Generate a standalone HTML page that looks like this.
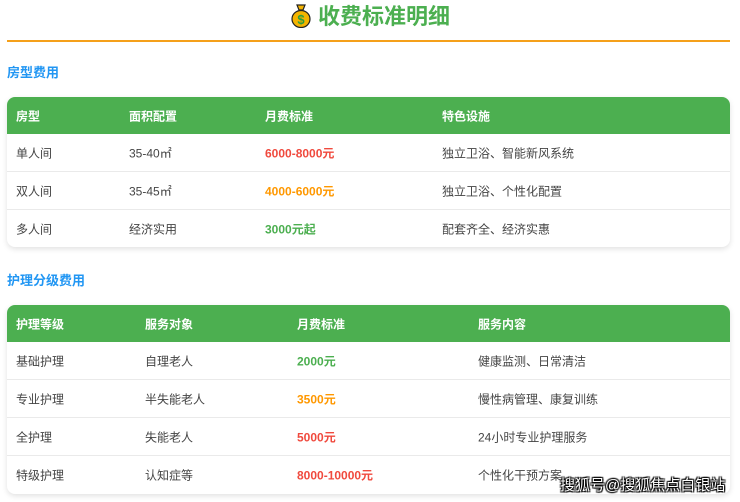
<!DOCTYPE html>
<html><head><meta charset="utf-8"><style>
*{margin:0;padding:0;box-sizing:border-box}
body{width:740px;height:502px;background:#fff;font-family:"Liberation Sans","Noto Sans CJK SC",sans-serif;position:relative;overflow:hidden;color:#444}
.title{position:absolute;top:3px;left:0;width:740px;text-align:center;font-size:22px;font-weight:bold;color:#4caf50;line-height:28px}
.line{position:absolute;left:7px;top:40px;width:723px;height:2px;background:#f5a01a}
.h{position:absolute;left:7px;font-size:13px;font-weight:bold;color:#2196f3}
.tbl{position:absolute;left:7px;width:723px;border-radius:8px;overflow:hidden;box-shadow:0 2px 6px rgba(0,0,0,.12);background:#fff}
.row{position:relative;border-bottom:1px solid #eaeaea;font-size:12px}
.row:last-child{border-bottom:none}
.row span{position:absolute;top:50%;transform:translateY(-50%);white-space:nowrap}
.hd{background:#4caf50;color:#fff;font-weight:bold;border-bottom:none}
.r{color:#f04a3e;font-weight:bold}.o{color:#ff9800;font-weight:bold}.g{color:#4caf50;font-weight:bold}
.wm{position:absolute;left:560px;top:477px;font-size:15px;line-height:18px;white-space:nowrap;color:#fff;text-shadow:0 0 1px #000,1px 1px 1px #000,-1px -1px 1px #000,1px -1px 1px #000,-1px 1px 1px #000}
</style></head><body>
<div class="title"><svg width="22" height="24" viewBox="0 0 22 24" style="vertical-align:-4px;margin-right:6px"><path d="M7 1h8l-2 5h-4z" fill="#f5b400" stroke="#222" stroke-width="1.2"/><ellipse cx="11" cy="15" rx="9" ry="8.5" fill="#f5b400" stroke="#222" stroke-width="1.2"/><text x="11" y="20" font-size="13" font-weight="bold" fill="#2e9e3e" text-anchor="middle" font-family="Liberation Sans">$</text></svg>收费标准明细</div>
<div class="line"></div>
<div class="h" style="top:62px">房型费用</div>
<div class="tbl" style="top:97px">
<div class="row hd" style="height:37px"><span style="left:9px">房型</span><span style="left:122px">面积配置</span><span style="left:258px">月费标准</span><span style="left:435px">特色设施</span></div>
<div class="row" style="height:38px"><span style="left:9px">单人间</span><span style="left:122px">35-40㎡</span><span style="left:258px" class="r">6000-8000元</span><span style="left:435px">独立卫浴、智能新风系统</span></div>
<div class="row" style="height:38px"><span style="left:9px">双人间</span><span style="left:122px">35-45㎡</span><span style="left:258px" class="o">4000-6000元</span><span style="left:435px">独立卫浴、个性化配置</span></div>
<div class="row" style="height:37px"><span style="left:9px">多人间</span><span style="left:122px">经济实用</span><span style="left:258px" class="g">3000元起</span><span style="left:435px">配套齐全、经济实惠</span></div>
</div>
<div class="h" style="top:270px">护理分级费用</div>
<div class="tbl" style="top:305px">
<div class="row hd" style="height:37px"><span style="left:9px">护理等级</span><span style="left:138px">服务对象</span><span style="left:290px">月费标准</span><span style="left:471px">服务内容</span></div>
<div class="row" style="height:38px"><span style="left:9px">基础护理</span><span style="left:138px">自理老人</span><span style="left:290px" class="g">2000元</span><span style="left:471px">健康监测、日常清洁</span></div>
<div class="row" style="height:38px"><span style="left:9px">专业护理</span><span style="left:138px">半失能老人</span><span style="left:290px" class="o">3500元</span><span style="left:471px">慢性病管理、康复训练</span></div>
<div class="row" style="height:38px"><span style="left:9px">全护理</span><span style="left:138px">失能老人</span><span style="left:290px" class="r">5000元</span><span style="left:471px">24小时专业护理服务</span></div>
<div class="row" style="height:38px"><span style="left:9px">特级护理</span><span style="left:138px">认知症等</span><span style="left:290px" class="r">8000-10000元</span><span style="left:471px">个性化干预方案</span></div>
</div>
<div class="wm">搜狐号@搜狐焦点白银站</div>
</body></html>
